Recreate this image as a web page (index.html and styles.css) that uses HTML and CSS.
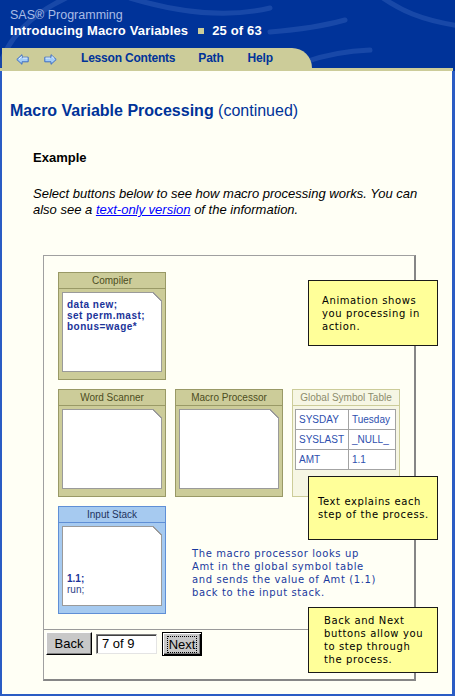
FILE: index.html
```html
<!DOCTYPE html>
<html lang="en">
<head>
<meta charset="utf-8">
<title>Macro Variable Processing</title>
<link rel="stylesheet" href="styles.css">
</head>
<body>
<div class="window">
  <header class="top">
    <svg class="swoosh" viewBox="0 0 455 71" aria-hidden="true">
      <path d="M-4 80 C 2 45, 25 15, 75 -6" />
      <path d="M130 -2 C 170 10, 220 20, 270 8" />
      <path d="M270 32 C 295 30, 320 27, 345 20" />
      <path d="M305 62 C 325 55, 345 51, 370 50" />
      <path d="M380 -4 C 400 10, 420 20, 460 26" />
    </svg>
    <div class="titles">
      <div class="course">SAS® Programming</div>
      <div class="lesson">Introducing Macro Variables<span class="sq"></span>25 of 63</div>
    </div>
    <nav class="nav">
      <a class="arrow" href="#" aria-label="Previous">
        <svg width="13" height="11" viewBox="0 0 13 11"><path d="M0.8 5.5 L6 0.7 V3.2 H12.2 V7.8 H6 V10.3 Z" fill="#A4CDF6" stroke="#3B6CC6" stroke-width="1" stroke-linejoin="round"/><path d="M3 5 L6 2.3 M6.8 4 H11.5" stroke="#fff" stroke-width="0.8" fill="none"/></svg>
      </a>
      <a class="arrow next-arrow" href="#" aria-label="Next">
        <svg width="13" height="11" viewBox="0 0 13 11"><path d="M12.2 5.5 L7 0.7 V3.2 H0.8 V7.8 H7 V10.3 Z" fill="#A4CDF6" stroke="#3B6CC6" stroke-width="1" stroke-linejoin="round"/><path d="M1.5 4 H6.2 M7.8 2.3 L10.2 4.6" stroke="#fff" stroke-width="0.8" fill="none"/></svg>
      </a>
      <a class="navlink first" href="#">Lesson Contents</a>
      <a class="navlink path" href="#">Path</a>
      <a class="navlink help" href="#">Help</a>
    </nav>
    <div class="strip"></div>
  </header>

  <main class="page">
    <h1 class="title">Macro Variable Processing <span class="cont">(continued)</span></h1>
    <section class="example">
      <h2 class="ex-head">Example</h2>
      <p class="ex-text">Select buttons below to see how macro processing works. You can<br>also see a <a href="#">text-only version</a> of the information.</p>

      <div class="frame">
        <div class="stage">
          <div class="box tan compiler">
            <div class="box-head">Compiler</div>
            <div class="sheet code">data new;<br>set perm.mast;<br>bonus=wage*</div>
          </div>

          <div class="box tan scanner">
            <div class="box-head">Word Scanner</div>
            <div class="sheet"></div>
          </div>
          <div class="box tan processor">
            <div class="box-head">Macro Processor</div>
            <div class="sheet"></div>
          </div>
          <div class="box faded symbols">
            <div class="box-head">Global Symbol Table</div>
            <table class="symtab">
              <tr><td>SYSDAY</td><td>Tuesday</td></tr>
              <tr><td>SYSLAST</td><td>_NULL_</td></tr>
              <tr><td>AMT</td><td>1.1</td></tr>
            </table>
          </div>

          <div class="box blue input">
            <div class="box-head">Input Stack</div>
            <div class="sheet stack"><b>1.1;</b><span>run;</span></div>
          </div>
          <p class="explain">The macro processor looks up<br>Amt in the global symbol table<br>and sends the value of Amt (1.1)<br>back to the input stack.</p>
        </div>

        <div class="controls">
          <button class="btn back" type="button">Back</button>
          <div class="step">7 of 9</div>
          <button class="btn next" type="button"><span class="focus">Next</span></button>
        </div>

        <div class="callout c1">Animation shows<br>you processing in<br>action.</div>
        <div class="callout c2">Text explains each<br>step of the process.</div>
        <div class="callout c3">Back and Next<br>buttons allow you<br>to step through<br>the process.</div>
      </div>
    </section>
  </main>
</div>
</body>
</html>
```

FILE: styles.css
```css
* {
  box-sizing: border-box;
  margin: 0;
  padding: 0;
}

html, body {
  width: 455px;
  height: 696px;
  overflow: hidden;
}

body {
  background: #003399;
  font-family: "Liberation Sans", Arial, sans-serif;
}

.window {
  width: 455px;
  height: 696px;
  display: flex;
  flex-direction: column;
  background: #003399;
}

/* ---------- header ---------- */
.top {
  position: relative;
  height: 71px;
  display: flex;
  flex-direction: column;
  flex: none;
}

.swoosh {
  position: absolute;
  left: 0;
  top: 0;
  width: 455px;
  height: 71px;
  fill: none;
  stroke: rgba(110, 150, 225, 0.22);
  stroke-width: 5;
  stroke-linecap: round;
}

.titles {
  position: relative;
  height: 48px;
  padding: 8px 0 0 10px;
}

.course {
  font-size: 12.5px;
  line-height: 15px;
  color: #A9BCE6;
}

.lesson {
  font-size: 13px;
  line-height: 16px;
  font-weight: bold;
  letter-spacing: 0.15px;
  color: #fff;
}

.sq {
  display: inline-block;
  width: 6px;
  height: 6px;
  background: #CCCC99;
  margin: 0 8px 0 10px;
  vertical-align: 1px;
}

.nav {
  position: relative;
  height: 20px;
  width: 310px;
  margin-left: 2px;
  background: #CCCC99;
  border-top-right-radius: 20px 20px;
  display: flex;
  align-items: center;
  padding-left: 14px;
}

.arrow {
  display: block;
  width: 13px;
  height: 11px;
  margin-top: 2px;
}

.arrow svg {
  display: block;
}

.next-arrow {
  margin-left: 15px;
}

.navlink {
  font-size: 12px;
  line-height: 20px;
  font-weight: bold;
  letter-spacing: -0.2px;
  color: #003399;
  text-decoration: none;
}

.navlink.first { margin-left: 24px; }
.navlink.path { margin-left: 23px; }
.navlink.help { margin-left: 24px; }

.strip {
  position: relative;
  height: 3px;
  margin-right: 2px;
  background: #CCCC99;
}

/* ---------- page ---------- */
.page {
  flex: 1;
  background: #FFFFF5;
  border-style: solid;
  border-color: #2A5CC4;
  border-width: 0 3px 2px 2px;
  padding: 30px 0 0 8px;
}

.title {
  font-size: 16px;
  line-height: 19px;
  font-weight: bold;
  color: #003399;
}

.title .cont {
  font-weight: normal;
}

.example {
  margin: 30px 0 0 23px;
}

.ex-head {
  font-size: 13px;
  line-height: 16px;
  font-weight: bold;
  color: #000;
}

.ex-text {
  margin-top: 20px;
  font-size: 13px;
  line-height: 16px;
  font-style: italic;
  color: #000;
}

.ex-text a {
  color: #0000FF;
  text-decoration: underline;
}

/* ---------- animation frame ---------- */
.frame {
  position: relative;
  margin: 37px 0 0 10px;
  width: 373px;
  border-style: solid;
  border-color: #A0A0A0 #868686 #868686 #A0A0A0;
  border-width: 1px 2px 2px 1px;
}

.stage {
  display: grid;
  grid-template-columns: repeat(3, 108px);
  grid-template-rows: repeat(3, 108px);
  gap: 9px;
  padding: 16px 0 15px 14px;
}

.compiler { grid-column: 1; grid-row: 1; }
.scanner { grid-column: 1; grid-row: 2; }
.processor { grid-column: 2; grid-row: 2; }
.symbols { grid-column: 3; grid-row: 2; }
.input { grid-column: 1; grid-row: 3; }

.box {
  --fold: #CCCC99;
  display: flex;
  flex-direction: column;
  border: 1px solid #999966;
  background: #CCCC99;
  padding: 0 3px 7px;
}

.box-head {
  height: 16px;
  margin: 0 -3px;
  border-bottom: 1px solid #999966;
  font-size: 10px;
  line-height: 15px;
  text-align: center;
  color: #4D4D22;
}

.sheet {
  position: relative;
  margin-top: 3px;
  flex: 1;
  background: #fff;
  border: 1px solid #9A9A9A;
}

.sheet::after {
  content: "";
  position: absolute;
  top: -1px;
  right: -1px;
  width: 9px;
  height: 9px;
  background: linear-gradient(to bottom left, var(--fold) 0, var(--fold) 46%, #9A9A9A 46%, #9A9A9A 60%, #fff 60%);
}

.code {
  padding: 6px 4px 0;
  font-size: 10px;
  line-height: 11px;
  font-weight: bold;
  letter-spacing: 0.5px;
  color: #1A3399;
}

.box.blue {
  --fold: #A6CAF0;
  border-color: #5F8FD6;
  background: #A6CAF0;
}

.box.blue .box-head {
  border-bottom-color: #5F8FD6;
  color: #22335E;
}

.stack {
  display: flex;
  flex-direction: column;
  justify-content: flex-end;
  padding: 0 4px 10px;
  font-size: 10px;
  line-height: 11px;
  color: #1A3399;
}

.stack span {
  color: #2E4488;
}

.box.faded {
  background: #F6F6E4;
  border-color: #CCCC99;
  padding: 0 3px 0 2px;
}

.box.faded .box-head {
  margin: 0 -3px 0 -2px;
  color: #8C8C6C;
  border-bottom-color: #CCCC99;
}

.symtab {
  margin-top: 3px;
  width: 101px;
  border-collapse: collapse;
  background: #fff;
  font-size: 10px;
  color: #2E4FAE;
}

.symtab td {
  height: 20px;
  border: 1px solid #A3A3A3;
  padding: 0 3px;
  white-space: nowrap;
}

.symtab td:first-child {
  width: 53px;
}

.explain {
  grid-column: 2 / 4;
  grid-row: 3;
  padding: 41px 0 0 17px;
  font-family: "DejaVu Sans", Verdana, sans-serif;
  font-size: 10px;
  line-height: 13px;
  letter-spacing: 0.6px;
  color: #1A3A9E;
  white-space: nowrap;
}

/* ---------- controls ---------- */
.controls {
  height: 50px;
  border-top: 1px solid #9A9A9A;
  display: flex;
  align-items: flex-start;
  padding: 2px 0 0 2px;
}

.btn {
  height: 23px;
  font-family: "Liberation Sans", Arial, sans-serif;
  font-size: 13px;
  color: #000;
  background: #C8C8C8;
  border: 1px solid;
  border-color: #fff #000 #000 #fff;
  box-shadow: inset -1px -1px #808080;
}

.btn.back {
  width: 46px;
}

.step {
  margin: 2px 0 0 4px;
  width: 61px;
  height: 20px;
  border: 1px solid;
  border-color: #808080 #E4E4E4 #E4E4E4 #808080;
  box-shadow: inset 1px 1px #404040;
  background: #fff;
  font-size: 13px;
  line-height: 18px;
  padding-left: 5px;
  color: #000;
}

.btn.next {
  margin-left: 5px;
  width: 40px;
  height: 24px;
  border: 1px solid #000;
  box-shadow: inset 1px 1px #fff, inset -1px -1px #000, inset -2px -2px #808080;
  padding: 0;
}

.focus {
  display: inline-block;
  outline: 1px dotted #000;
  outline-offset: 0;
  padding: 0 1px;
  line-height: 15px;
}

/* ---------- callouts ---------- */
.callout {
  position: absolute;
  left: 264px;
  width: 130px;
  display: flex;
  align-items: center;
  background: #FFFF99;
  border: 1px solid #1A1A1A;
  font-family: "DejaVu Sans", Verdana, sans-serif;
  font-size: 10px;
  line-height: 13px;
  letter-spacing: 0.6px;
  color: #000;
  padding-left: 13px;
  white-space: nowrap;
}

.callout.c1 {
  top: 24px;
  height: 66px;
}

.callout.c2 {
  top: 220px;
  height: 64px;
  padding-left: 9px;
}

.callout.c3 {
  top: 351px;
  height: 66px;
  padding-left: 15px;
}
```
